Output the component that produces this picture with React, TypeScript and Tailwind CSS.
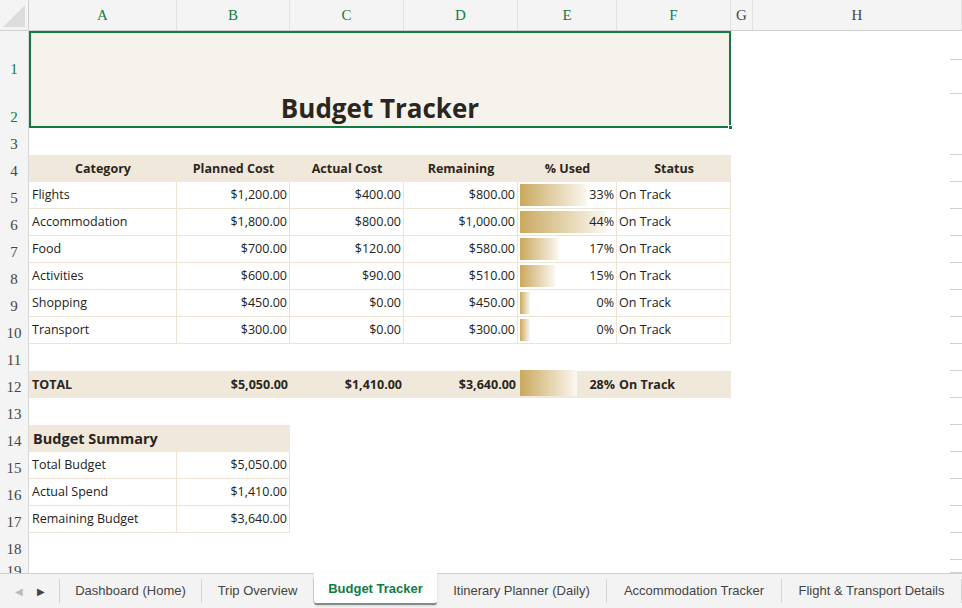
import React from 'react'

const W = [29, 148, 113, 114, 114, 99, 114, 22, 209]
const LETTERS = ['A', 'B', 'C', 'D', 'E', 'F', 'G', 'H']
const body = { fontFamily: '"Open Sans", Lato, sans-serif' }
const serif = { fontFamily: '"Liberation Serif", serif' }

type Item = { cat: string; plan: string; act: string; rem: string; pct: string; bar: number }
const items: Item[] = [
  { cat: 'Flights', plan: '$1,200.00', act: '$400.00', rem: '$800.00', pct: '33%', bar: 67 },
  { cat: 'Accommodation', plan: '$1,800.00', act: '$800.00', rem: '$1,000.00', pct: '44%', bar: 86 },
  { cat: 'Food', plan: '$700.00', act: '$120.00', rem: '$580.00', pct: '17%', bar: 39 },
  { cat: 'Activities', plan: '$600.00', act: '$90.00', rem: '$510.00', pct: '15%', bar: 35 },
  { cat: 'Shopping', plan: '$450.00', act: '$0.00', rem: '$450.00', pct: '0%', bar: 10 },
  { cat: 'Transport', plan: '$300.00', act: '$0.00', rem: '$300.00', pct: '0%', bar: 10 },
]

function RowNum({ n, green, h = 27, center }: { n: number; green?: boolean; h?: number; center?: boolean }) {
  return (
    <div
      className={`w-[29px] shrink-0 flex justify-center text-[15px] bg-[#f4f4f4] border-r border-[#d8d8d8] overflow-hidden leading-[18px] ${center ? 'items-center' : 'items-end pb-[2px]'} ${green ? 'text-[#107c41]' : 'text-[#444]'}`}
      style={{ ...serif, height: h }}
    >
      <span className={h < 20 ? 'translate-y-[9px]' : ''}>{n}</span>
    </div>
  )
}

function Row({ n, children, h = 27 }: { n: number; children?: React.ReactNode; h?: number }) {
  return (
    <div className="flex relative" style={{ height: h }}>
      <RowNum n={n} h={h} />
      <div className="flex flex-1">{children}</div>
      <div className="absolute right-0 bottom-0 w-[12px] border-b border-[#cfcfcf]" />
    </div>
  )
}

function Bar({ w }: { w: number }) {
  return (
    <div
      className="absolute left-[2px] top-[2px] bottom-[2px] bg-gradient-to-r from-[#c9a95c] to-[#fbf8f1]"
      style={{ width: w }}
    />
  )
}

function DataRow({ n, it }: { n: number; it: Item }) {
  const c = 'h-full flex items-end pb-[3px] text-[12.5px] text-[#222] border-b border-r border-[#ece3d3]'
  return (
    <Row n={n}>
      <div className={`${c} w-[148px] pl-[3px]`}>{it.cat}</div>
      <div className={`${c} w-[113px] justify-end pr-[2px]`}>{it.plan}</div>
      <div className={`${c} w-[114px] justify-end pr-[2px]`}>{it.act}</div>
      <div className={`${c} w-[114px] justify-end pr-[2px]`}>{it.rem}</div>
      <div className={`${c} w-[99px] justify-end pr-[2px] relative`}>
        <Bar w={it.bar} />
        <span className="relative">{it.pct}</span>
      </div>
      <div className={`${c} w-[114px] pl-[2px]`}>On Track</div>
    </Row>
  )
}

export default function App() {
  const head = 'h-full flex items-end pb-[3px] justify-center font-bold text-[12.5px] text-[#2b2620] bg-[#f0e8da]'
  const sumC = 'h-full flex items-end pb-[3px] text-[12.5px] text-[#222] border-b border-r border-[#ece3d3]'
  return (
    <div className="w-[962px] h-[608px] bg-white overflow-hidden flex flex-col" style={body}>
      {/* column header */}
      <div className="flex h-[31px] shrink-0 bg-[#f4f4f4] border-b border-[#d0d0d0]">
        <div className="w-[29px] shrink-0 border-r border-[#d0d0d0] relative">
          <div className="absolute right-[3px] bottom-[3px] w-0 h-0 border-l-[22px] border-l-transparent border-b-[22px] border-b-[#dcdcdc]" />
        </div>
        {LETTERS.map((l, i) => (
          <div
            key={l}
            className={`shrink-0 flex items-center justify-center text-[15px] border-r border-[#e2e2e2] ${i < 6 ? 'text-[#107c41]' : 'text-[#444]'}`}
            style={{ ...serif, width: W[i + 1] }}
          >
            {l}
          </div>
        ))}
      </div>

      {/* title rows */}
      <div className="flex h-[97px] shrink-0 relative">
        <div className="w-[29px] shrink-0 flex flex-col">
          <RowNum n={1} green h={76} center />
          <RowNum n={2} green h={21} />
        </div>
        <div className="w-[702px] h-full bg-[#f6f3ec] border-2 border-[#107c41] flex items-end justify-center relative">
          <span className="text-[26px] font-bold text-[#2b2620] leading-none mb-[5px]">Budget Tracker</span>
          <div className="absolute -right-[4px] -bottom-[4px] w-[5px] h-[5px] bg-[#107c41] border border-white" />
        </div>
        <div className="absolute right-0 top-[28px] w-[12px] border-b border-[#cfcfcf]" />
        <div className="absolute right-0 top-[62px] w-[12px] border-b border-[#cfcfcf]" />
      </div>

      <Row n={3} />
      <Row n={4}>
        <div className={`${head} w-[148px]`}>Category</div>
        <div className={`${head} w-[113px]`}>Planned Cost</div>
        <div className={`${head} w-[114px]`}>Actual Cost</div>
        <div className={`${head} w-[114px]`}>Remaining</div>
        <div className={`${head} w-[99px]`}>% Used</div>
        <div className={`${head} w-[114px]`}>Status</div>
      </Row>
      {items.map((it, i) => (
        <DataRow key={it.cat} n={5 + i} it={it} />
      ))}
      <Row n={11} />
      <Row n={12}>
        <div className="flex w-[702px] bg-[#f0e8da] text-[12.5px] font-bold text-[#2b2620] h-full items-end pb-[3px]">
          <div className="w-[148px] pl-[3px]">TOTAL</div>
          <div className="w-[113px] text-right pr-[2px]">$5,050.00</div>
          <div className="w-[114px] text-right pr-[2px]">$1,410.00</div>
          <div className="w-[114px] text-right pr-[2px]">$3,640.00</div>
          <div className="w-[99px] relative text-right pr-[2px]">
            <div className="absolute left-[2px] -top-[6px] h-[26px] bg-gradient-to-r from-[#c9a95c] to-[#fbf8f1] w-[57px]" />
            <span className="relative">28%</span>
          </div>
          <div className="w-[114px] pl-[2px]">On Track</div>
        </div>
      </Row>
      <Row n={13} />
      <Row n={14}>
        <div className="w-[261px] h-full bg-[#f0e8da] flex items-end pb-[2px] pl-[4px] text-[14.5px] font-bold text-[#2b2620]">
          Budget Summary
        </div>
      </Row>
      {[
        ['Total Budget', '$5,050.00'],
        ['Actual Spend', '$1,410.00'],
        ['Remaining Budget', '$3,640.00'],
      ].map(([k, v], i) => (
        <Row key={k} n={15 + i}>
          <div className={`${sumC} w-[148px] pl-[3px]`}>{k}</div>
          <div className={`${sumC} w-[113px] justify-end pr-[2px]`}>{v}</div>
        </Row>
      ))}
      <Row n={18} />
      <Row n={19} h={13} />

      {/* sheet tabs */}
      <div
        className="flex h-[35px] shrink-0 bg-[#f3f3f3] border-t border-[#cfcfcf] text-[13px] text-[#444]"
        style={{ fontFamily: '"Liberation Sans", Arial, sans-serif' }}
      >
        <div className="w-[60px] flex items-center justify-center gap-[14px] border-r border-[#d4d4d4] my-[5px]">
          <span className="text-[#bbb] text-[10px]">◀</span>
          <span className="text-[#444] text-[10px]">▶</span>
        </div>
        {[
          ['Dashboard (Home)', 142],
          ['Trip Overview', 112],
          ['Budget Tracker', 123],
          ['Itinerary Planner (Daily)', 170],
          ['Accommodation Tracker', 175],
          ['Flight & Transport Details', 180],
        ].map(([t, w]) =>
          t === 'Budget Tracker' ? (
            <div
              key={t}
              className="shrink-0 -mt-px bg-white flex items-center justify-center pt-[2px] font-bold text-[#107c41] border-b-2 border-[#888] rounded-b-[3px] mb-[3px] shadow-sm"
              style={{ width: w as number }}
            >
              {t}
            </div>
          ) : (
            <div
              key={t}
              className="shrink-0 flex items-center justify-center border-r border-[#d4d4d4] my-[5px] whitespace-nowrap"
              style={{ width: w as number }}
            >
              {t}
            </div>
          )
        )}
      </div>
    </div>
  )
}
